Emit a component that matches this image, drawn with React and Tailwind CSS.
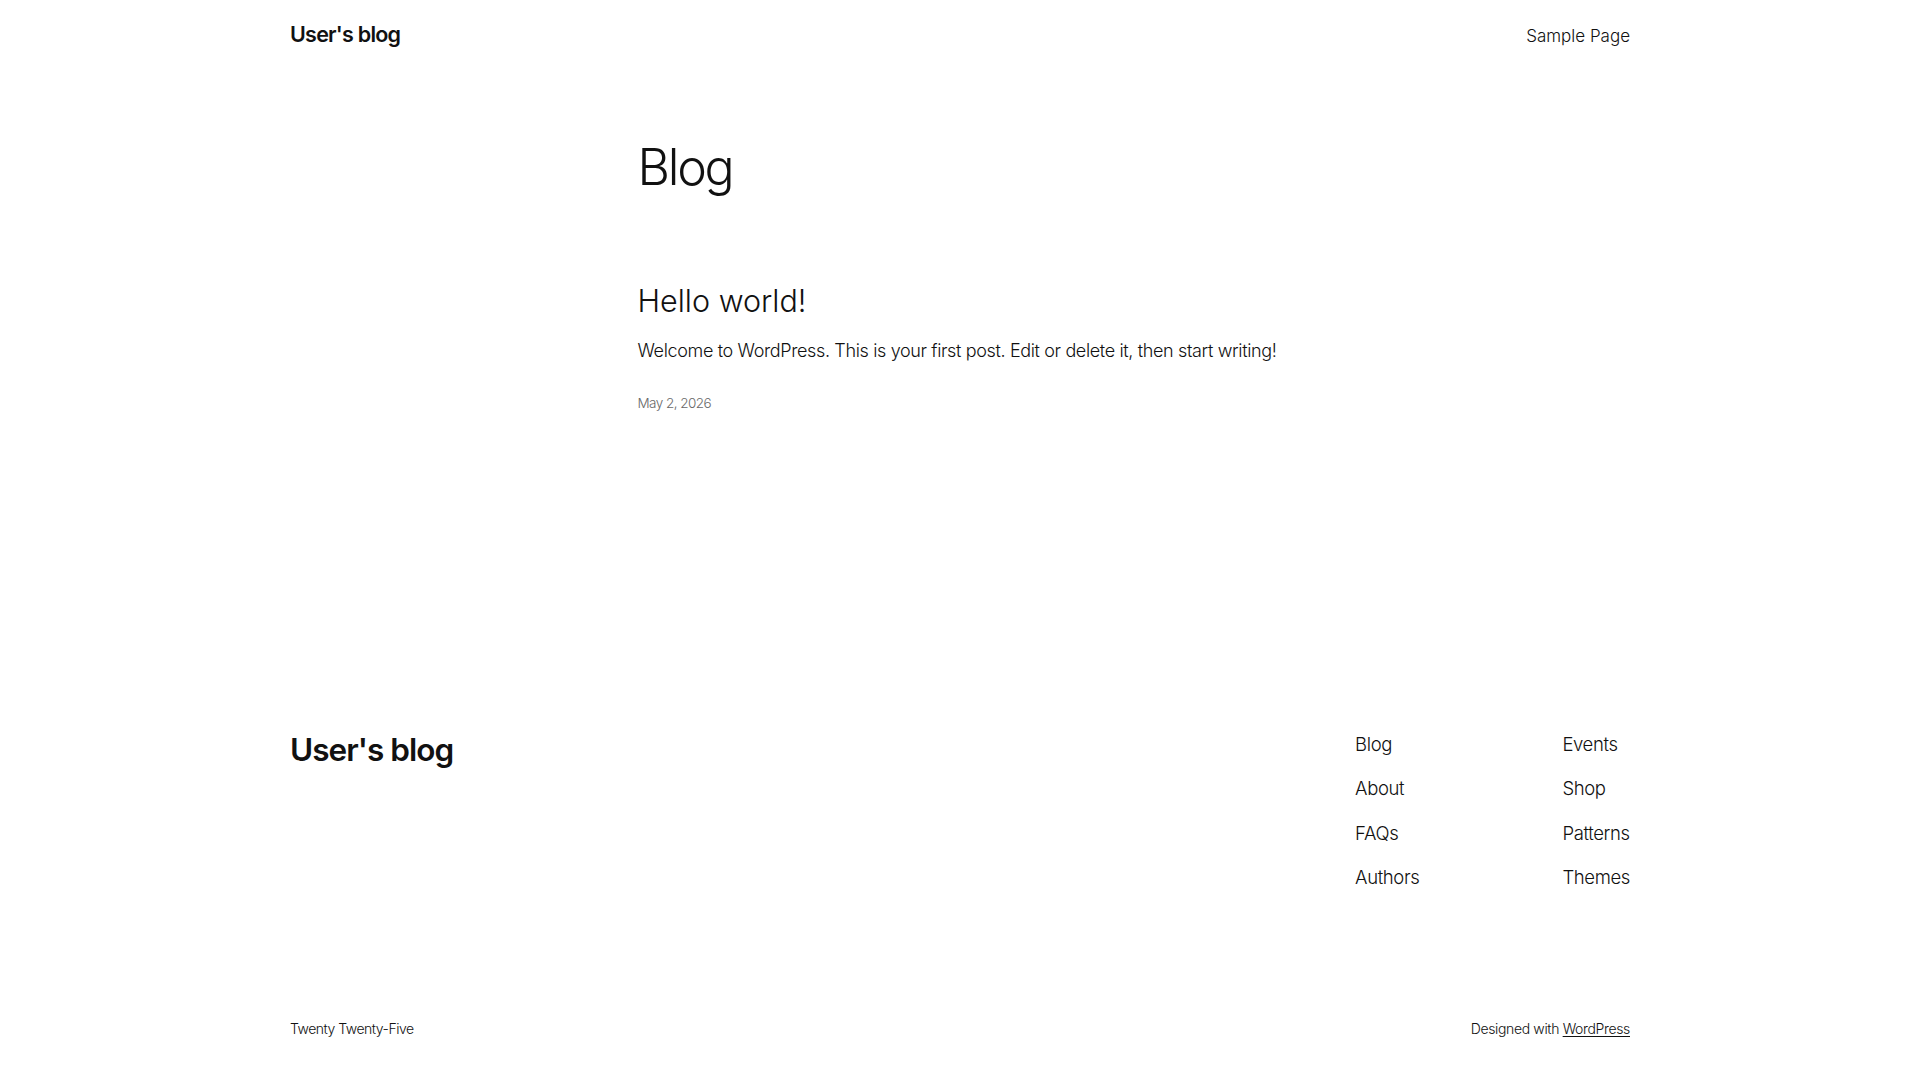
export default function App() {
  return (
    <div className="min-h-[1080px] bg-white text-[#111111] font-['Inter',sans-serif] flex flex-col">
      <header className="w-[1340px] mx-auto pt-[24px] flex items-baseline justify-between">
        <a className="text-[21.5px] leading-none font-semibold tracking-[-0.035em]">User's blog</a>
        <a className="text-[17px] leading-none font-light">Sample Page</a>
      </header>

      <main className="w-[645px] mx-auto">
        <h1 className="mt-[96px] text-[50px] leading-none font-light tracking-[-0.045em]">Blog</h1>
        <h2 className="mt-[94px] text-[30.5px] leading-none font-light">Hello world!</h2>
        <p className="mt-[26px] text-[18px] leading-none font-light tracking-[-0.02em]">
          Welcome to WordPress. This is your first post. Edit or delete it, then start writing!
        </p>
        <p className="mt-[37px] text-[13.5px] leading-none font-light tracking-[-0.04em] text-[#686868]">
          May 2, 2026
        </p>
      </main>

      <footer className="w-[1340px] mx-auto mt-[323px] flex flex-col">
        <div className="flex justify-between items-start">
          <div className="text-[31.5px] leading-none font-semibold tracking-[-0.03em]">User's blog</div>
          <div className="flex gap-[143px] pt-[1px]">
            <nav className="flex flex-col gap-[26px] text-[18.5px] leading-none font-light tracking-[-0.02em]">
              <a>Blog</a>
              <a>About</a>
              <a>FAQs</a>
              <a>Authors</a>
            </nav>
            <nav className="flex flex-col gap-[26px] text-[18.5px] leading-none font-light tracking-[-0.02em]">
              <a>Events</a>
              <a>Shop</a>
              <a>Patterns</a>
              <a>Themes</a>
            </nav>
          </div>
        </div>
        <div className="mt-[135px] flex justify-between items-baseline text-[14px] leading-none font-light">
          <span className="tracking-[-0.035em]">Twenty Twenty-Five</span>
          <span className="tracking-[-0.025em]">
            Designed with <a className="underline underline-offset-2">WordPress</a>
          </span>
        </div>
      </footer>
    </div>
  );
}
